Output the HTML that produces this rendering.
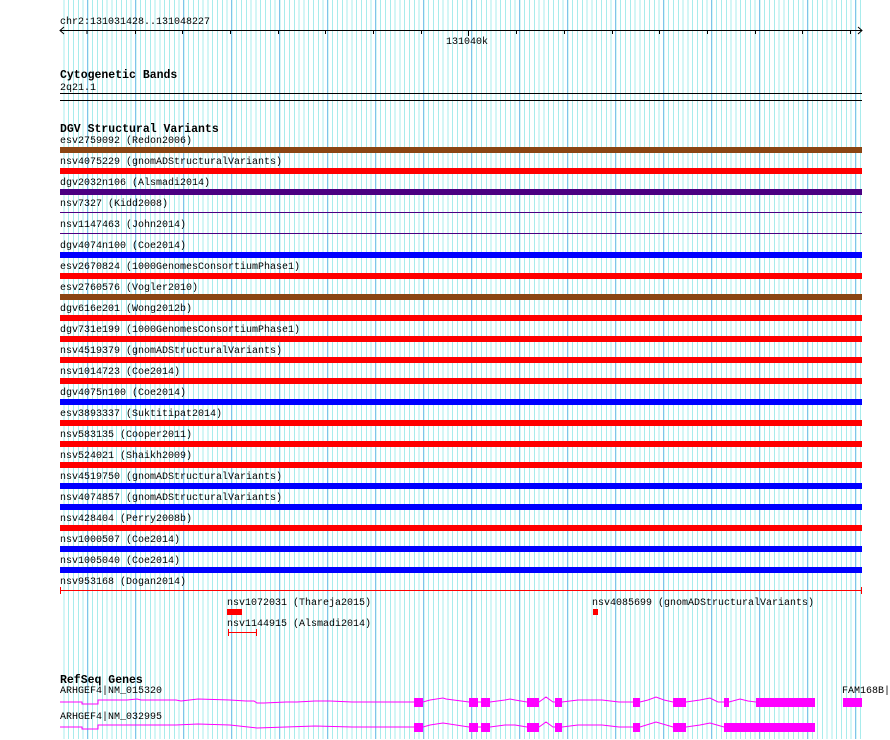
<!DOCTYPE html>
<html><head><meta charset="utf-8"><style>
body{margin:0;width:890px;height:739px;background:#fff;position:relative;overflow:hidden;font-family:"Liberation Mono","DejaVu Sans Mono",monospace;font-size:10px;color:#000}
.grid{position:absolute;left:60px;top:0;width:802px;height:739px;
background:
repeating-linear-gradient(to right,transparent 0 26.8px,#80c4ea 26.8px 27.8px,transparent 27.8px 48px),
repeating-linear-gradient(to right,transparent 0 3.4px,#a8ecec 3.4px 4.4px,transparent 4.4px 4.8px);}
.t{position:absolute;white-space:pre;line-height:10px;margin-top:2px}
.b{position:absolute;font-weight:bold;font-size:11.5px;white-space:pre;line-height:12px;margin-top:2px}
.bar{position:absolute;left:60px;width:802px;height:6px}
.ln{position:absolute;left:60px;width:802px;height:1px}
</style></head><body>
<div class="grid"></div>
<div class="t" style="left:60px;top:16px">chr2:131031428..131048227</div>
<div class="ln" style="top:30px;background:#000"></div>
<svg style="position:absolute;left:0;top:0" width="890" height="740">
<polyline points="64,27 60,30.5 64,34" fill="none" stroke="#000"/>
<polyline points="858,27 862,30.5 858,34" fill="none" stroke="#000"/>
<g stroke="#000"><line x1="87" y1="30" x2="87" y2="34"/><line x1="135.5" y1="30" x2="135.5" y2="34"/><line x1="182.5" y1="30" x2="182.5" y2="34"/><line x1="230.5" y1="30" x2="230.5" y2="34"/><line x1="278.5" y1="30" x2="278.5" y2="34"/><line x1="325.5" y1="30" x2="325.5" y2="34"/><line x1="373.5" y1="30" x2="373.5" y2="34"/><line x1="421.5" y1="30" x2="421.5" y2="34"/><line x1="468.5" y1="30" x2="468.5" y2="36"/><line x1="516.5" y1="30" x2="516.5" y2="34"/><line x1="564.5" y1="30" x2="564.5" y2="34"/><line x1="612.5" y1="30" x2="612.5" y2="34"/><line x1="659.5" y1="30" x2="659.5" y2="34"/><line x1="707.5" y1="30" x2="707.5" y2="34"/><line x1="755.5" y1="30" x2="755.5" y2="34"/><line x1="802.5" y1="30" x2="802.5" y2="34"/><line x1="850.5" y1="30" x2="850.5" y2="34"/></g>
<g stroke="#f00"><line x1="60.5" y1="587" x2="60.5" y2="594"/><line x1="861.5" y1="587" x2="861.5" y2="594"/>
<line x1="228" y1="632.5" x2="257" y2="632.5"/><line x1="228.5" y1="629" x2="228.5" y2="636"/><line x1="256.5" y1="629" x2="256.5" y2="636"/></g>
<g fill="none" stroke="#f0f" stroke-width="1">
<polyline points="60,702 82,702 82,704 98,704 98,700 127,700 137,699 141,700 176,700 181,701 198,699 230,700 246,701 254,701 257,703 264,703 286,702 297,702 315,701 330,701 352,702 414,702 423,702 430,700 443,698 446,699 469,702 490,702 505,700 510,699 515,700 527,702 539,702 546,697 553,702 562,702 578,700 602,700 619,702 633,702 640,702 648,700 656,697 664,700 673,702 686,702 700,700 710,698 718,702 724,702 729,702 740,699 748,701 756,702"/>
<polyline points="60,727 82,727 82,729 98,729 98,725 127,725 141,725 176,725 198,724 230,725 257,728 286,727 315,726 352,727 414,727 423,727 430,725 443,723 469,727 490,727 505,725 515,725 527,727 539,727 546,722 553,727 562,727 578,725 602,725 619,727 633,727 640,727 656,722 673,727 686,727 700,725 710,723 724,727"/>
</g>
<g fill="#f0f">
<rect x="414" y="698" width="9" height="9"/><rect x="469" y="698" width="9" height="9"/><rect x="481" y="698" width="9" height="9"/><rect x="527" y="698" width="12" height="9"/><rect x="555" y="698" width="7" height="9"/><rect x="633" y="698" width="7" height="9"/><rect x="673" y="698" width="13" height="9"/><rect x="724" y="698" width="5" height="9"/><rect x="756" y="698" width="59" height="9"/><rect x="843" y="698" width="19" height="9"/>
<rect x="414" y="723" width="9" height="9"/><rect x="469" y="723" width="9" height="9"/><rect x="481" y="723" width="9" height="9"/><rect x="527" y="723" width="12" height="9"/><rect x="555" y="723" width="7" height="9"/><rect x="633" y="723" width="7" height="9"/><rect x="673" y="723" width="13" height="9"/><rect x="724" y="723" width="91" height="9"/>
</g>
<rect x="227" y="609" width="15" height="6" fill="#f00"/><rect x="593" y="609" width="5" height="6" fill="#f00"/>
</svg>
<div class="t" style="left:446px;top:36px">131040k</div>
<div class="b" style="left:60px;top:68px">Cytogenetic Bands</div>
<div class="t" style="left:60px;top:82px">2q21.1</div>
<div class="ln" style="top:93px;background:#000"></div>
<div class="ln" style="top:100px;background:#000"></div>
<div class="b" style="left:60px;top:122px">DGV Structural Variants</div>

<div class="t" style="left:60px;top:135px">esv2759092 (Redon2006)</div><div class="bar" style="top:147px;background:#8b4513"></div>
<div class="t" style="left:60px;top:156px">nsv4075229 (gnomADStructuralVariants)</div><div class="bar" style="top:168px;background:#f00"></div>
<div class="t" style="left:60px;top:177px">dgv2032n106 (Alsmadi2014)</div><div class="bar" style="top:189px;background:#4b0082"></div>
<div class="t" style="left:60px;top:198px">nsv7327 (Kidd2008)</div><div class="ln" style="top:212px;background:#4b0082"></div>
<div class="t" style="left:60px;top:219px">nsv1147463 (John2014)</div><div class="ln" style="top:233px;background:#4b0082"></div>
<div class="t" style="left:60px;top:240px">dgv4074n100 (Coe2014)</div><div class="bar" style="top:252px;background:#00f"></div>
<div class="t" style="left:60px;top:261px">esv2670824 (1000GenomesConsortiumPhase1)</div><div class="bar" style="top:273px;background:#f00"></div>
<div class="t" style="left:60px;top:282px">esv2760576 (Vogler2010)</div><div class="bar" style="top:294px;background:#8b4513"></div>
<div class="t" style="left:60px;top:303px">dgv616e201 (Wong2012b)</div><div class="bar" style="top:315px;background:#f00"></div>
<div class="t" style="left:60px;top:324px">dgv731e199 (1000GenomesConsortiumPhase1)</div><div class="bar" style="top:336px;background:#f00"></div>
<div class="t" style="left:60px;top:345px">nsv4519379 (gnomADStructuralVariants)</div><div class="bar" style="top:357px;background:#f00"></div>
<div class="t" style="left:60px;top:366px">nsv1014723 (Coe2014)</div><div class="bar" style="top:378px;background:#f00"></div>
<div class="t" style="left:60px;top:387px">dgv4075n100 (Coe2014)</div><div class="bar" style="top:399px;background:#00f"></div>
<div class="t" style="left:60px;top:408px">esv3893337 (Suktitipat2014)</div><div class="bar" style="top:420px;background:#f00"></div>
<div class="t" style="left:60px;top:429px">nsv583135 (Cooper2011)</div><div class="bar" style="top:441px;background:#f00"></div>
<div class="t" style="left:60px;top:450px">nsv524021 (Shaikh2009)</div><div class="bar" style="top:462px;background:#f00"></div>
<div class="t" style="left:60px;top:471px">nsv4519750 (gnomADStructuralVariants)</div><div class="bar" style="top:483px;background:#00f"></div>
<div class="t" style="left:60px;top:492px">nsv4074857 (gnomADStructuralVariants)</div><div class="bar" style="top:504px;background:#00f"></div>
<div class="t" style="left:60px;top:513px">nsv428404 (Perry2008b)</div><div class="bar" style="top:525px;background:#f00"></div>
<div class="t" style="left:60px;top:534px">nsv1000507 (Coe2014)</div><div class="bar" style="top:546px;background:#00f"></div>
<div class="t" style="left:60px;top:555px">nsv1005040 (Coe2014)</div><div class="bar" style="top:567px;background:#00f"></div>
<div class="t" style="left:60px;top:576px">nsv953168 (Dogan2014)</div><div class="ln" style="top:590px;background:#f00"></div>

<div class="t" style="left:227px;top:597px">nsv1072031 (Thareja2015)</div>
<div class="t" style="left:227px;top:618px">nsv1144915 (Alsmadi2014)</div>
<div class="t" style="left:592px;top:597px">nsv4085699 (gnomADStructuralVariants)</div>

<div class="b" style="left:60px;top:673px">RefSeq Genes</div>
<div class="t" style="left:60px;top:685px">ARHGEF4|NM_015320</div>
<div class="t" style="left:842px;top:685px">FAM168B|</div>
<div class="t" style="left:60px;top:711px">ARHGEF4|NM_032995</div>
</body></html>
